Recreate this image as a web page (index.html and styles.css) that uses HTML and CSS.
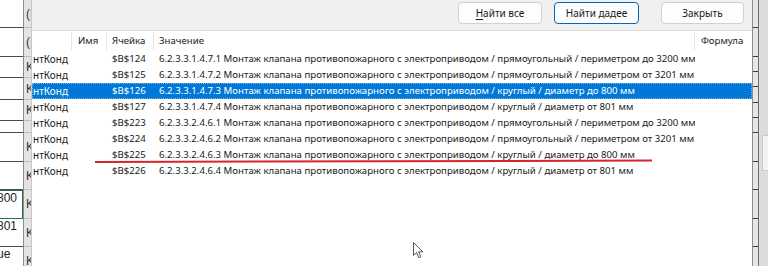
FILE: index.html
```html
<!DOCTYPE html>
<html lang="ru">
<head>
<meta charset="utf-8">
<link rel="stylesheet" href="styles.css">
</head>
<body>
<div class="screen">
  <div class="sheet-left">
    <div class="cells">
      <div class="cell h28"></div>
      <div class="cell h29"></div>
      <div class="cell h21"></div>
      <div class="cell h22"></div>
      <div class="cell h21"></div>
      <div class="cell h12"></div>
      <div class="cell h29"></div>
      <div class="cell h28"></div>
      <div class="cell h29 sel">800</div>
      <div class="cell h28">801</div>
      <div class="cell h28">ue</div>
    </div>
    <div class="kcol">
      <div class="kcell h28">(I</div>
      <div class="kcell h29">(I</div>
      <div class="kcell h21">K</div>
      <div class="kcell h22">K</div>
      <div class="kcell h21">K</div>
      <div class="kcell h12"></div>
      <div class="kcell h29">K</div>
      <div class="kcell h28">K</div>
      <div class="kcell h29">K</div>
      <div class="kcell h28">K</div>
      <div class="kcell h28">K</div>
    </div>
  </div>

  <div class="dialog">
    <div class="toolbar">
      <button class="btn"><u>Н</u>айти все</button>
      <button class="btn focus">Найти дадее</button>
      <button class="btn close">Закрыть</button>
    </div>
    <div class="list">
      <div class="row head">
        <div class="c c1"></div>
        <div class="c c2">Имя</div>
        <div class="c c3">Ячейка</div>
        <div class="c c4">Значение</div>
        <div class="c c5">Формула</div>
      </div>
      <div class="row">
        <div class="c c1">нтКонд</div><div class="c c2"></div><div class="c c3">$B$124</div>
        <div class="c c4">6.2.3.3.1.4.7.1 Монтаж клапана противопожарного с электроприводом / прямоугольный / периметром до 3200 мм</div><div class="c c5"></div>
      </div>
      <div class="row">
        <div class="c c1">нтКонд</div><div class="c c2"></div><div class="c c3">$B$125</div>
        <div class="c c4">6.2.3.3.1.4.7.2 Монтаж клапана противопожарного с электроприводом / прямоугольный / периметром от 3201 мм</div><div class="c c5"></div>
      </div>
      <div class="row selected">
        <div class="c c1">нтКонд</div><div class="c c2"></div><div class="c c3">$B$126</div>
        <div class="c c4">6.2.3.3.1.4.7.3 Монтаж клапана противопожарного с электроприводом / круглый / диаметр до 800 мм</div><div class="c c5"></div>
      </div>
      <div class="row">
        <div class="c c1">нтКонд</div><div class="c c2"></div><div class="c c3">$B$127</div>
        <div class="c c4">6.2.3.3.1.4.7.4 Монтаж клапана противопожарного с электроприводом / круглый / диаметр от 801 мм</div><div class="c c5"></div>
      </div>
      <div class="row">
        <div class="c c1">нтКонд</div><div class="c c2"></div><div class="c c3">$B$223</div>
        <div class="c c4">6.2.3.3.2.4.6.1 Монтаж клапана противопожарного с электроприводом / прямоугольный / периметром до 3200 мм</div><div class="c c5"></div>
      </div>
      <div class="row">
        <div class="c c1">нтКонд</div><div class="c c2"></div><div class="c c3">$B$224</div>
        <div class="c c4">6.2.3.3.2.4.6.2 Монтаж клапана противопожарного с электроприводом / прямоугольный / периметром от 3201 мм</div><div class="c c5"></div>
      </div>
      <div class="row">
        <div class="c c1">нтКонд</div><div class="c c2"></div><div class="c c3">$B$225</div>
        <div class="c c4">6.2.3.3.2.4.6.3 Монтаж клапана противопожарного с электроприводом / круглый / диаметр до 800 мм</div><div class="c c5"></div>
      </div>
      <div class="row">
        <div class="c c1">нтКонд</div><div class="c c2"></div><div class="c c3">$B$226</div>
        <div class="c c4">6.2.3.3.2.4.6.4 Монтаж клапана противопожарного с электроприводом / круглый / диаметр от 801 мм</div><div class="c c5"></div>
      </div>
    </div>
  </div>

  <div class="sheet-right">
    <div class="rcol">
      <div class="rcell h28"></div>
      <div class="rcell h29"></div>
      <div class="rcell h15"></div>
      <div class="rcell h15"></div>
      <div class="rcell h16"></div>
      <div class="rcell h15"></div>
      <div class="rcell h15"></div>
      <div class="rcell h29"></div>
      <div class="rcell h28"></div>
      <div class="rcell h29"></div>
      <div class="rcell h28"></div>
    </div>
    <div class="rgray"><div class="rbox"></div></div>
  </div>

  <svg class="redline" width="768" height="266" viewBox="0 0 768 266">
    <path d="M95 162 L652 160.6" stroke="#d8232a" stroke-width="2" fill="none"/>
  </svg>
  <svg class="cursor" width="12" height="18" viewBox="0 0 12 18">
    <path d="M0.5 0.5 L0.5 13.5 L3.5 10.5 L5.8 15.8 L7.8 14.9 L5.6 9.8 L9.8 9.8 Z" fill="#fff" stroke="#555" stroke-width="1" stroke-linejoin="round"/>
  </svg>
</div>
</body>
</html>
```

FILE: styles.css
```css
* { box-sizing: border-box; }
html, body { margin: 0; padding: 0; background: #fff; }
.screen {
  position: relative;
  width: 768px;
  height: 266px;
  overflow: hidden;
  display: flex;
  font-family: "Noto Sans", "Liberation Sans", sans-serif;
  font-size: 9.65px;
  color: #1a1a1a;
}

/* left spreadsheet strip */
.sheet-left { width: 32px; display: flex; flex: none; }
.cells { width: 24px; border-right: 1px solid #8c8c8c; background: #fff; }
.cell {
  border-bottom: 1px solid #4a4a4a;
  font-family: "Liberation Sans", sans-serif;
  font-size: 12px;
  color: #222;
  line-height: 14px;
  padding-top: 0;
  text-indent: -3px;
  white-space: nowrap;
  overflow: hidden;
}
.cell.sel { border: 1px solid #217346; border-left: none; }
.kcol { width: 8px; background: #e4e4e4; overflow: hidden; border-right: 1px solid #c8c8c8; }
.kcell {
  display: flex;
  align-items: center;
  border-bottom: 1px solid #bcbcbc;
  font-family: "Liberation Sans", sans-serif;
  font-size: 12px;
  color: #333;
  padding-left: 2px;
  white-space: nowrap;
}
.h12 { height: 12px; }
.h15 { height: 15px; }
.h16 { height: 16px; }
.h21 { height: 21px; }
.h22 { height: 22px; }
.h28 { height: 28px; }
.h29 { height: 29px; }

/* dialog */
.dialog {
  width: 720px;
  flex: none;
  display: flex;
  flex-direction: column;
  background: #f0f0f0;
}
.toolbar {
  height: 30px;
  flex: none;
  display: flex;
  justify-content: flex-end;
  align-items: flex-start;
  padding: 2px 8px 0 0;
}
.btn {
  height: 22px;
  width: 84px;
  border: 1px solid #d0d0d0;
  border-radius: 4px;
  background: #fdfdfd;
  font-family: "Noto Sans", sans-serif;
  font-size: 10px;
  color: #1a1a1a;
  padding: 0;
  margin: 0;
}
.btn + .btn { margin-left: 12px; }
.btn.focus { width: 85px; border-color: #0067c0; }
.btn.close { width: 83px; margin-left: 22px; }
.btn u { text-decoration-thickness: 1px; text-underline-offset: 2px; }

.list {
  flex: 1;
  background: #fff;
  border-top: 1px solid #dcdcdc;
  overflow: hidden;
}
.row {
  display: flex;
  height: 16px;
  align-items: center;
  white-space: nowrap;
}
.row.head { height: 20px; color: #222; }
.c { overflow: hidden; flex: none; line-height: 16px; }
.c1 { width: 40px; padding-left: 1px; font-size: 10px; }
.c2 { width: 35px; padding-left: 6px; }
.c3 { width: 47px; padding-left: 5px; }
.c4 { width: 541px; padding-left: 5px; }
.c5 { width: 57px; padding-left: 6px; }
.head .c { height: 18px; border-right: 1px solid #e5e5e5; line-height: 18px; }
.head .c5 { border-right: none; }
.row.selected {
  background: #0078d7;
  color: #fff;
  outline: 1px dotted #7fb6e8;
  outline-offset: -1px;
}

/* right spreadsheet strip */
.sheet-right { width: 16px; flex: none; display: flex; background: #f0f0f0; }
.rcol { width: 7px; border-left: 1px solid #8c8c8c; border-right: 1px solid #707070; background: #e6e6e6; }
.rcell { border-bottom: 1px solid #3a3a3a; }
.rgray { flex: 1; background: #dcdcdc; padding-top: 135px; padding-left: 3px; }
.rbox { height: 36px; background: #f3f3f3; border: 1px solid #c8c8c8; border-right: none; }

/* overlays */
.redline { position: absolute; left: 0; top: 0; pointer-events: none; }
.cursor { position: absolute; left: 413px; top: 242px; }
```
